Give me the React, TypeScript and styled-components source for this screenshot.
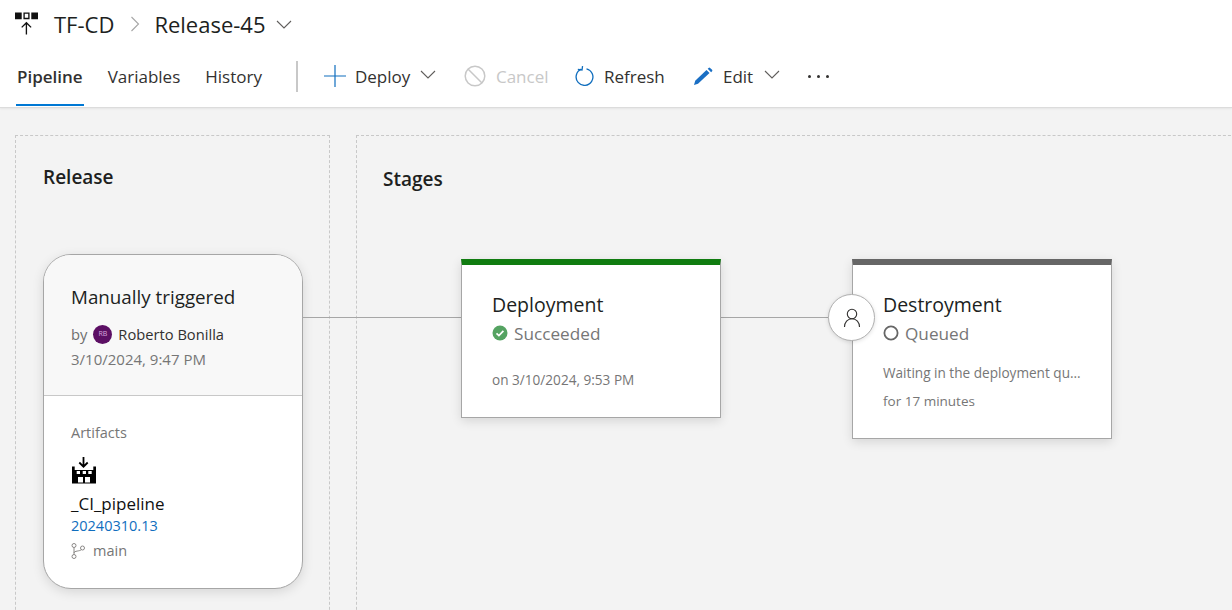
import React from 'react';
import styled, { createGlobalStyle } from 'styled-components';

const GlobalStyle = createGlobalStyle`
  html, body {
    margin: 0;
    padding: 0;
    height: 100%;
    overflow: hidden;
    background: #f3f3f3;
  }
  body {
    font-family: 'Open Sans', 'Noto Sans', sans-serif;
    color: #201f1e;
  }
`;

const Chevron: React.FC<{ color?: string }> = ({ color = '#605e5c' }) => (
  <svg width="16" height="9" viewBox="0 0 16 9" fill="none">
    <path d="M1 1l7 7 7-7" stroke={color} strokeWidth="1.1" />
  </svg>
);

const App: React.FC = () => {
  return (
    <StyledPage>
      <GlobalStyle />
      <StyledHeader>
        <StyledTitleRow>
          <svg width="24" height="24" viewBox="0 0 24 24">
            <path d="M0 0h7v7H0zM17 0h7v7h-7z" fill="#111" />
            <path d="M9.5 .7h5v5.6h-5z" fill="none" stroke="#111" strokeWidth="1.4" />
            <path d="M11.9 23V11M7 15.5l4.900-4.900 4.900 4.900" fill="none" stroke="#111" strokeWidth="1.4" />
          </svg>
          <StyledCrumb>TF-CD</StyledCrumb>
          <svg width="10" height="16" viewBox="0 0 10 16" fill="none">
            <path d="M1.500 1l7 7-7 7" stroke="#a6a6a6" strokeWidth="1.1" />
          </svg>
          <StyledCrumb>Release-45</StyledCrumb>
          <Chevron />
        </StyledTitleRow>
        <StyledToolbar>
          <StyledTabs>
            <StyledTab $active>Pipeline</StyledTab>
            <StyledTab>Variables</StyledTab>
            <StyledTab>History</StyledTab>
          </StyledTabs>
          <StyledDivider />
          <StyledAction $gap={9} $width={140}>
            <svg width="22" height="22" viewBox="0 0 22 22" fill="none">
              <path d="M11 0v22M0 11h22" stroke="#106ebe" strokeWidth="1.200" />
            </svg>
            <span>Deploy</span>
            <StyledActionChevron><Chevron /></StyledActionChevron>
          </StyledAction>
          <StyledAction $gap={10} $width={111} $disabled>
            <svg width="22" height="22" viewBox="0 0 22 22" fill="none">
              <circle cx="11" cy="11" r="9.800" stroke="#c8c8c8" strokeWidth="1.500" />
              <path d="M4 4l14 14" stroke="#c8c8c8" strokeWidth="1.500" />
            </svg>
            <span>Cancel</span>
          </StyledAction>
          <StyledAction $gap={9} $width={119}>
            <svg width="20" height="20" viewBox="0 0 20 20" fill="none">
              <path d="M6.300 3.200A8.400 8.400 0 1 0 11.500 2.800" stroke="#106ebe" strokeWidth="1.300" />
              <path d="M7 0v4H2.800" stroke="#106ebe" strokeWidth="1.300" transform="rotate(8 7 4)" />
            </svg>
            <span>Refresh</span>
          </StyledAction>
          <StyledAction $gap={10} $width={114}>
            <svg width="19" height="18" viewBox="0 0 19 18">
              <path d="M0 18l1.200-4.300L12.500 3l3 3L4 16.800z" fill="#1a6fc4" />
              <path d="M13.700 1.800l.9-.9q.8-.7 1.500 0l2 1.900q.6.700 0 1.500l-1 .9z" fill="#1a6fc4" />
            </svg>
            <span>Edit</span>
            <StyledActionChevron><Chevron /></StyledActionChevron>
          </StyledAction>
          <StyledDots>
            <i /><i /><i />
          </StyledDots>
        </StyledToolbar>
      </StyledHeader>

      <StyledCanvas>
        <StyledReleasePanel>
          <StyledPanelTitle>Release</StyledPanelTitle>
          <StyledReleaseCard>
            <StyledTrigger>
              <StyledTriggerTitle>Manually triggered</StyledTriggerTitle>
              <StyledByLine>
                by
                <StyledAvatar>RB</StyledAvatar>
                <StyledPerson>Roberto Bonilla</StyledPerson>
              </StyledByLine>
              <StyledDate>3/10/2024, 9:47 PM</StyledDate>
            </StyledTrigger>
            <StyledArtifacts>
              <StyledArtifactsLabel>Artifacts</StyledArtifactsLabel>
              <StyledBuildIcon width="24" height="27" viewBox="0 0 24 27">
                <path d="M11.500 0v9.500M7.300 5.500l4.200 4.200 4.200-4.200" fill="none" stroke="#000" strokeWidth="1.800" />
                <path d="M0 9.500h2.700v3.500h18.600V9.500H24v17H0z" fill="#000" />
                <path d="M4.700 14H8v3H4.700zM10.700 14H14v3h-3.300zM16.300 14h3.400v3h-3.400zM6 20h5v5.500H6zM13 20h5v5.500h-5z" fill="#fff" />
              </StyledBuildIcon>
              <StyledArtifactName>_CI_pipeline</StyledArtifactName>
              <StyledBuildLink>20240310.13</StyledBuildLink>
              <StyledBranch>
                <svg width="14" height="16" viewBox="0 0 14 16" fill="none">
                  <circle cx="3" cy="2.500" r="2" stroke="#8a8886" />
                  <circle cx="3" cy="13.500" r="2" stroke="#8a8886" />
                  <circle cx="11.500" cy="5" r="2" stroke="#8a8886" />
                  <path d="M3 4.500v7M3 10c0-2.500 6-1.500 7.500-3.500" stroke="#8a8886" />
                </svg>
                main
              </StyledBranch>
            </StyledArtifacts>
          </StyledReleaseCard>
        </StyledReleasePanel>

        <StyledStagesPanel>
          <StyledStagesTitle>Stages</StyledStagesTitle>
          <StyledStageRow>
            <StyledConnector $width={158} $offset={-80} />
            <StyledStage $bar="#107c10" $height={159}>
              <StyledStageName>Deployment</StyledStageName>
              <StyledStatus>
                <svg width="16" height="16" viewBox="0 0 16 16">
                  <circle cx="8" cy="8" r="7.500" fill="#55a362" />
                  <path d="M4.500 8.300l2.400 2.300 4.500-4.800" fill="none" stroke="#fff" strokeWidth="1.700" />
                </svg>
                Succeeded
              </StyledStatus>
              <StyledStageDate>on 3/10/2024, 9:53 PM</StyledStageDate>
            </StyledStage>
            <StyledConnector $width={131} />
            <StyledStage $bar="#666666" $height={180}>
              <StyledApprover>
                <svg width="18" height="20" viewBox="0 0 18 20" fill="none">
                  <circle cx="9" cy="6" r="4.700" stroke="#323130" strokeWidth="1.100" />
                  <path d="M1.500 19c0-4.500 3-8.300 7.500-8.300s7.500 3.800 7.500 8.300" stroke="#323130" strokeWidth="1.100" />
                </svg>
              </StyledApprover>
              <StyledStageName>Destroyment</StyledStageName>
              <StyledStatus>
                <svg width="16" height="16" viewBox="0 0 16 16" fill="none">
                  <circle cx="8" cy="8" r="6.600" stroke="#666" strokeWidth="1.800" />
                </svg>
                Queued
              </StyledStatus>
              <StyledWaiting>Waiting in the deployment qu...</StyledWaiting>
              <StyledDuration>for 17 minutes</StyledDuration>
            </StyledStage>
          </StyledStageRow>
        </StyledStagesPanel>
      </StyledCanvas>
    </StyledPage>
  );
};

const StyledPage = styled.div`
  height: 610px;
  width: 1232px;
  overflow: hidden;
  display: flex;
  flex-direction: column;
`;

const StyledHeader = styled.header`
  height: 107px;
  flex: none;
  background: #fff;
  border-bottom: 1px solid #dcdcdc;
  box-shadow: 0 1px 2px rgba(0, 0, 0, 0.06);
  display: flex;
  flex-direction: column;
`;

const StyledTitleRow = styled.div`
  height: 48px;
  display: flex;
  align-items: center;
  padding-left: 15px;

  & > svg:nth-of-type(1) {
    margin-right: 16px;
    margin-top: -1px;
    width: 23px;
  }
  & > svg:nth-of-type(2) {
    margin: 0 14px 0 16px;
  }
  & > svg:nth-of-type(3) {
    margin-left: 10px;
  }
`;

const StyledCrumb = styled.span`
  font-size: 22px;
  line-height: 28px;
  color: #201f1e;
`;

const StyledToolbar = styled.div`
  flex: 1;
  display: flex;
  align-items: stretch;
  padding-left: 16px;
`;

const StyledTabs = styled.div`
  display: flex;
  gap: 23px;
`;

const StyledTab = styled.div<{ $active?: boolean }>`
  height: 58px;
  box-sizing: border-box;
  padding: 0 1px;
  display: flex;
  align-items: center;
  font-size: 17px;
  font-weight: ${({ $active }) => ($active ? 600 : 400)};
  color: #323130;
  border-bottom: 2px solid ${({ $active }) => ($active ? '#0078d4' : 'transparent')};
`;

const StyledDivider = styled.div`
  width: 2px;
  height: 31px;
  margin: 13px 26px 0 33px;
  background: #c8c8c8;
`;

const StyledAction = styled.div<{ $gap: number; $width: number; $disabled?: boolean }>`
  width: ${({ $width }) => $width}px;
  height: 56px;
  flex: none;
  display: flex;
  align-items: center;
  gap: ${({ $gap }) => $gap}px;
  font-size: 17px;
  color: ${({ $disabled }) => ($disabled ? '#c8c8c8' : '#323130')};
`;

const StyledActionChevron = styled.span`
  display: flex;
  margin-top: -3px;
  margin-left: 1px;
`;

const StyledDots = styled.div`
  height: 56px;
  display: flex;
  align-items: center;
  gap: 6px;

  i {
    width: 3px;
    height: 3px;
    border-radius: 50%;
    background: #323130;
  }
`;

const StyledCanvas = styled.main`
  flex: 1;
  display: flex;
  align-items: flex-start;
  gap: 26px;
  padding: 27px 0 0 15px;
  overflow: hidden;
`;

const StyledReleasePanel = styled.section`
  width: 315px;
  height: 520px;
  flex: none;
  box-sizing: border-box;
  border: 1px dashed #c8c8c8;
  padding: 27px 0 0 27px;
`;

const StyledPanelTitle = styled.h2`
  margin: 0;
  font-size: 19px;
  line-height: 28px;
  font-weight: 600;
  color: #201f1e;
`;

const StyledStagesPanel = styled.section`
  width: 900px;
  height: 520px;
  flex: none;
  box-sizing: border-box;
  border: 1px dashed #c8c8c8;
  padding: 29px 0 0 26px;
`;

const StyledStagesTitle = styled(StyledPanelTitle)``;

const StyledReleaseCard = styled.div`
  width: 260px;
  height: 335px;
  box-sizing: border-box;
  margin-top: 63px;
  border: 1px solid #a6a6a6;
  border-radius: 28px;
  background: #fff;
  box-shadow: 0 3px 12px rgba(0, 0, 0, 0.12);
  overflow: hidden;
`;

const StyledTrigger = styled.div`
  height: 141px;
  box-sizing: border-box;
  padding: 28px 27px 0;
  background: #f8f8f8;
  border-bottom: 1px solid #c8c8c8;
`;

const StyledTriggerTitle = styled.div`
  font-size: 18.800px;
  line-height: 28px;
  color: #201f1e;
`;

const StyledByLine = styled.div`
  margin-top: 13px;
  display: flex;
  align-items: center;
  font-size: 14.700px;
  line-height: 20px;
  color: #6e6e6e;
`;

const StyledAvatar = styled.span`
  width: 19px;
  height: 19px;
  margin: 0 6px 0 6px;
  border-radius: 50%;
  background: #5c0f64;
  color: #d9a8dc;
  font-size: 7px;
  display: flex;
  align-items: center;
  justify-content: center;
`;

const StyledPerson = styled.span`
  color: #323130;
`;

const StyledDate = styled.div`
  margin-top: 5px;
  font-size: 15px;
  line-height: 20px;
  color: #767676;
`;

const StyledArtifacts = styled.div`
  padding: 27px 27px 0;
`;

const StyledArtifactsLabel = styled.div`
  font-size: 14.500px;
  line-height: 20px;
  color: #767676;
`;

const StyledBuildIcon = styled.svg`
  display: block;
  margin-top: 14px;
  margin-left: 1px;
`;

const StyledArtifactName = styled.div`
  margin-top: 9px;
  font-size: 17px;
  line-height: 22px;
  color: #111;
`;

const StyledBuildLink = styled.div`
  font-size: 14.500px;
  line-height: 22px;
  color: #106ebe;
`;

const StyledBranch = styled.div`
  margin-top: 3px;
  display: flex;
  align-items: center;
  gap: 8px;
  font-size: 14.500px;
  line-height: 22px;
  color: #767676;
`;

const StyledStageRow = styled.div`
  display: flex;
  align-items: flex-start;
  margin-top: 66px;
`;

const StyledConnector = styled.div<{ $width: number; $offset?: number }>`
  width: ${({ $width }) => $width}px;
  margin-left: ${({ $offset }) => $offset ?? 0}px;
  margin-top: 58px;
  flex: none;
  border-top: 1px solid #a6a6a6;
`;

const StyledStage = styled.div<{ $bar: string; $height: number }>`
  position: relative;
  width: 260px;
  height: ${({ $height }) => $height}px;
  flex: none;
  box-sizing: border-box;
  padding: 28px 28px 0 30px;
  background: #fff;
  border: 1px solid #a6a6a6;
  border-top: 6px solid ${({ $bar }) => $bar};
  box-shadow: 0 3px 10px rgba(0, 0, 0, 0.12);
`;

const StyledApprover = styled.div`
  position: absolute;
  left: -25px;
  top: 29px;
  width: 47px;
  height: 47px;
  box-sizing: border-box;
  border: 1px solid #b0b0b0;
  border-radius: 50%;
  background: #fff;
  box-shadow: 0 1px 4px rgba(0, 0, 0, 0.12);
  display: flex;
  align-items: center;
  justify-content: center;
`;

const StyledStageName = styled.div`
  font-size: 19.500px;
  line-height: 24px;
  color: #201f1e;
`;

const StyledStatus = styled.div`
  margin-top: 5px;
  display: flex;
  align-items: center;
  gap: 6px;
  font-size: 17.200px;
  line-height: 24px;
  color: #767676;

  svg {
    margin-top: -2px;
  }
`;

const StyledStageDate = styled.div`
  margin-top: 24px;
  font-size: 13.600px;
  line-height: 20px;
  color: #767676;
`;

const StyledWaiting = styled.div`
  margin-top: 17px;
  font-size: 13.600px;
  line-height: 20px;
  color: #767676;
  white-space: nowrap;
`;

const StyledDuration = styled.div`
  margin-top: 8px;
  font-size: 13.500px;
  line-height: 20px;
  color: #767676;
`;

export default App;
